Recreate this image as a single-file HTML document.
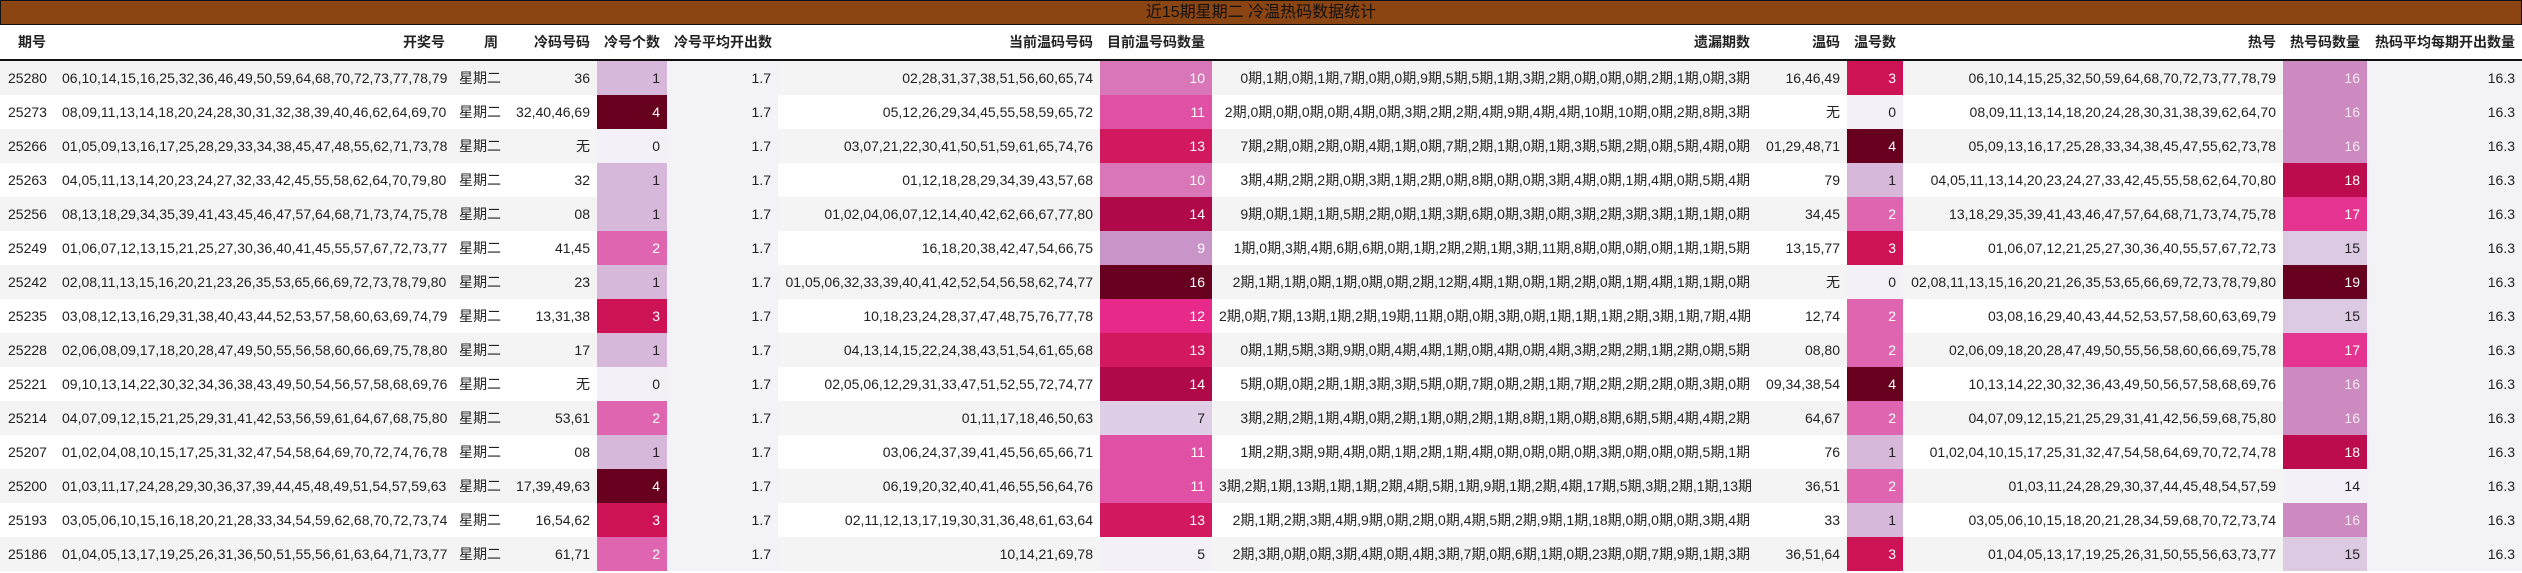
<!DOCTYPE html>
<html><head><meta charset="utf-8">
<style>
html,body{margin:0;padding:0;background:#fff;}
body{width:2522px;height:573px;overflow:hidden;font-family:"Liberation Sans","Noto Sans CJK SC",sans-serif;font-size:14px;color:#222;}
.title{box-sizing:border-box;height:25px;background:#8B4513;border:1px solid #111;text-align:center;line-height:23px;font-size:16px;color:#111;}
table{border-collapse:collapse;table-layout:fixed;width:2522px;}
td,th{padding:0 7px;text-align:right;white-space:nowrap;overflow:visible;}
th{height:34px;font-weight:bold;font-size:14px;border-bottom:2px solid #111;background:#fff;}
td{height:34px;}
tr.g td{background:#f4f4f4;}
tr.w td{background:#fff;}
td.l{text-align:left;padding-left:8px;}
th.l{text-align:left;padding-left:18px;}
tr td.av{background:#f3f2f7;}
.c0{background:#f3f1f7!important;color:#222}
.c1{background:#d7b7da!important;color:#222}
.c2{background:#df65b0!important;color:#fff}
.c3{background:#ce1256!important;color:#fff}
.c4{background:#67001f!important;color:#fff}
.t5{background:#f3f1f7!important;color:#222}
.t7{background:#dfcfe6!important;color:#222}
.t9{background:#c994c7!important;color:#fff}
.t10{background:#d876b8!important;color:#fff}
.t11{background:#e050a4!important;color:#fff}
.t12{background:#e7298a!important;color:#fff}
.t13{background:#d2185e!important;color:#fff}
.t14{background:#b0094a!important;color:#fff}
.t16{background:#67001f!important;color:#fff}
.h14{background:#f3f1f7!important;color:#222}
.h15{background:#dcc9e2!important;color:#222}
.h16{background:#cc8ac0!important;color:#f4e8f0}
.h17{background:#e5348f!important;color:#fff}
.h18{background:#bc0c4e!important;color:#fff}
.h19{background:#67001f!important;color:#fff}
</style></head><body>
<div class="title">近15期星期二 冷温热码数据统计</div>
<table>
<colgroup>
<col style="width:55px"><col style="width:397px"><col style="width:53px"><col style="width:92px"><col style="width:70px"><col style="width:111px"><col style="width:322px"><col style="width:112px"><col style="width:545px"><col style="width:90px"><col style="width:56px"><col style="width:380px"><col style="width:84px"><col style="width:155px">
</colgroup>
<tr><th class="l">期号</th><th>开奖号</th><th>周</th><th>冷码号码</th><th>冷号个数</th><th>冷号平均开出数</th><th>当前温码号码</th><th>目前温号码数量</th><th>遗漏期数</th><th>温码</th><th>温号数</th><th>热号</th><th>热号码数量</th><th>热码平均每期开出数量</th></tr>
<tr class="g"><td class="l">25280</td><td>06,10,14,15,16,25,32,36,46,49,50,59,64,68,70,72,73,77,78,79</td><td>星期二</td><td>36</td><td class="c1">1</td><td class="av">1.7</td><td>02,28,31,37,38,51,56,60,65,74</td><td class="t10">10</td><td>0期,1期,0期,1期,7期,0期,0期,9期,5期,5期,1期,3期,2期,0期,0期,0期,2期,1期,0期,3期</td><td>16,46,49</td><td class="c3">3</td><td>06,10,14,15,25,32,50,59,64,68,70,72,73,77,78,79</td><td class="h16">16</td><td class="av">16.3</td></tr>
<tr class="w"><td class="l">25273</td><td>08,09,11,13,14,18,20,24,28,30,31,32,38,39,40,46,62,64,69,70</td><td>星期二</td><td>32,40,46,69</td><td class="c4">4</td><td class="av">1.7</td><td>05,12,26,29,34,45,55,58,59,65,72</td><td class="t11">11</td><td>2期,0期,0期,0期,0期,4期,0期,3期,2期,2期,4期,9期,4期,4期,10期,10期,0期,2期,8期,3期</td><td>无</td><td class="c0">0</td><td>08,09,11,13,14,18,20,24,28,30,31,38,39,62,64,70</td><td class="h16">16</td><td class="av">16.3</td></tr>
<tr class="g"><td class="l">25266</td><td>01,05,09,13,16,17,25,28,29,33,34,38,45,47,48,55,62,71,73,78</td><td>星期二</td><td>无</td><td class="c0">0</td><td class="av">1.7</td><td>03,07,21,22,30,41,50,51,59,61,65,74,76</td><td class="t13">13</td><td>7期,2期,0期,2期,0期,4期,1期,0期,7期,2期,1期,0期,1期,3期,5期,2期,0期,5期,4期,0期</td><td>01,29,48,71</td><td class="c4">4</td><td>05,09,13,16,17,25,28,33,34,38,45,47,55,62,73,78</td><td class="h16">16</td><td class="av">16.3</td></tr>
<tr class="w"><td class="l">25263</td><td>04,05,11,13,14,20,23,24,27,32,33,42,45,55,58,62,64,70,79,80</td><td>星期二</td><td>32</td><td class="c1">1</td><td class="av">1.7</td><td>01,12,18,28,29,34,39,43,57,68</td><td class="t10">10</td><td>3期,4期,2期,2期,0期,3期,1期,2期,0期,8期,0期,0期,3期,4期,0期,1期,4期,0期,5期,4期</td><td>79</td><td class="c1">1</td><td>04,05,11,13,14,20,23,24,27,33,42,45,55,58,62,64,70,80</td><td class="h18">18</td><td class="av">16.3</td></tr>
<tr class="g"><td class="l">25256</td><td>08,13,18,29,34,35,39,41,43,45,46,47,57,64,68,71,73,74,75,78</td><td>星期二</td><td>08</td><td class="c1">1</td><td class="av">1.7</td><td>01,02,04,06,07,12,14,40,42,62,66,67,77,80</td><td class="t14">14</td><td>9期,0期,1期,1期,5期,2期,0期,1期,3期,6期,0期,3期,0期,3期,2期,3期,3期,1期,1期,0期</td><td>34,45</td><td class="c2">2</td><td>13,18,29,35,39,41,43,46,47,57,64,68,71,73,74,75,78</td><td class="h17">17</td><td class="av">16.3</td></tr>
<tr class="w"><td class="l">25249</td><td>01,06,07,12,13,15,21,25,27,30,36,40,41,45,55,57,67,72,73,77</td><td>星期二</td><td>41,45</td><td class="c2">2</td><td class="av">1.7</td><td>16,18,20,38,42,47,54,66,75</td><td class="t9">9</td><td>1期,0期,3期,4期,6期,6期,0期,1期,2期,2期,1期,3期,11期,8期,0期,0期,0期,1期,1期,5期</td><td>13,15,77</td><td class="c3">3</td><td>01,06,07,12,21,25,27,30,36,40,55,57,67,72,73</td><td class="h15">15</td><td class="av">16.3</td></tr>
<tr class="g"><td class="l">25242</td><td>02,08,11,13,15,16,20,21,23,26,35,53,65,66,69,72,73,78,79,80</td><td>星期二</td><td>23</td><td class="c1">1</td><td class="av">1.7</td><td>01,05,06,32,33,39,40,41,42,52,54,56,58,62,74,77</td><td class="t16">16</td><td>2期,1期,1期,0期,1期,0期,0期,2期,12期,4期,1期,0期,1期,2期,0期,1期,4期,1期,1期,0期</td><td>无</td><td class="c0">0</td><td>02,08,11,13,15,16,20,21,26,35,53,65,66,69,72,73,78,79,80</td><td class="h19">19</td><td class="av">16.3</td></tr>
<tr class="w"><td class="l">25235</td><td>03,08,12,13,16,29,31,38,40,43,44,52,53,57,58,60,63,69,74,79</td><td>星期二</td><td>13,31,38</td><td class="c3">3</td><td class="av">1.7</td><td>10,18,23,24,28,37,47,48,75,76,77,78</td><td class="t12">12</td><td>2期,0期,7期,13期,1期,2期,19期,11期,0期,0期,3期,0期,1期,1期,1期,2期,3期,1期,7期,4期</td><td>12,74</td><td class="c2">2</td><td>03,08,16,29,40,43,44,52,53,57,58,60,63,69,79</td><td class="h15">15</td><td class="av">16.3</td></tr>
<tr class="g"><td class="l">25228</td><td>02,06,08,09,17,18,20,28,47,49,50,55,56,58,60,66,69,75,78,80</td><td>星期二</td><td>17</td><td class="c1">1</td><td class="av">1.7</td><td>04,13,14,15,22,24,38,43,51,54,61,65,68</td><td class="t13">13</td><td>0期,1期,5期,3期,9期,0期,4期,4期,1期,0期,4期,0期,4期,3期,2期,2期,1期,2期,0期,5期</td><td>08,80</td><td class="c2">2</td><td>02,06,09,18,20,28,47,49,50,55,56,58,60,66,69,75,78</td><td class="h17">17</td><td class="av">16.3</td></tr>
<tr class="w"><td class="l">25221</td><td>09,10,13,14,22,30,32,34,36,38,43,49,50,54,56,57,58,68,69,76</td><td>星期二</td><td>无</td><td class="c0">0</td><td class="av">1.7</td><td>02,05,06,12,29,31,33,47,51,52,55,72,74,77</td><td class="t14">14</td><td>5期,0期,0期,2期,1期,3期,3期,5期,0期,7期,0期,2期,1期,7期,2期,2期,2期,0期,3期,0期</td><td>09,34,38,54</td><td class="c4">4</td><td>10,13,14,22,30,32,36,43,49,50,56,57,58,68,69,76</td><td class="h16">16</td><td class="av">16.3</td></tr>
<tr class="g"><td class="l">25214</td><td>04,07,09,12,15,21,25,29,31,41,42,53,56,59,61,64,67,68,75,80</td><td>星期二</td><td>53,61</td><td class="c2">2</td><td class="av">1.7</td><td>01,11,17,18,46,50,63</td><td class="t7">7</td><td>3期,2期,2期,1期,4期,0期,2期,1期,0期,2期,1期,8期,1期,0期,8期,6期,5期,4期,4期,2期</td><td>64,67</td><td class="c2">2</td><td>04,07,09,12,15,21,25,29,31,41,42,56,59,68,75,80</td><td class="h16">16</td><td class="av">16.3</td></tr>
<tr class="w"><td class="l">25207</td><td>01,02,04,08,10,15,17,25,31,32,47,54,58,64,69,70,72,74,76,78</td><td>星期二</td><td>08</td><td class="c1">1</td><td class="av">1.7</td><td>03,06,24,37,39,41,45,56,65,66,71</td><td class="t11">11</td><td>1期,2期,3期,9期,4期,0期,1期,2期,1期,4期,0期,0期,0期,0期,3期,0期,0期,0期,5期,1期</td><td>76</td><td class="c1">1</td><td>01,02,04,10,15,17,25,31,32,47,54,58,64,69,70,72,74,78</td><td class="h18">18</td><td class="av">16.3</td></tr>
<tr class="g"><td class="l">25200</td><td>01,03,11,17,24,28,29,30,36,37,39,44,45,48,49,51,54,57,59,63</td><td>星期二</td><td>17,39,49,63</td><td class="c4">4</td><td class="av">1.7</td><td>06,19,20,32,40,41,46,55,56,64,76</td><td class="t11">11</td><td>3期,2期,1期,13期,1期,1期,2期,4期,5期,1期,9期,1期,2期,4期,17期,5期,3期,2期,1期,13期</td><td>36,51</td><td class="c2">2</td><td>01,03,11,24,28,29,30,37,44,45,48,54,57,59</td><td class="h14">14</td><td class="av">16.3</td></tr>
<tr class="w"><td class="l">25193</td><td>03,05,06,10,15,16,18,20,21,28,33,34,54,59,62,68,70,72,73,74</td><td>星期二</td><td>16,54,62</td><td class="c3">3</td><td class="av">1.7</td><td>02,11,12,13,17,19,30,31,36,48,61,63,64</td><td class="t13">13</td><td>2期,1期,2期,3期,4期,9期,0期,2期,0期,4期,5期,2期,9期,1期,18期,0期,0期,0期,3期,4期</td><td>33</td><td class="c1">1</td><td>03,05,06,10,15,18,20,21,28,34,59,68,70,72,73,74</td><td class="h16">16</td><td class="av">16.3</td></tr>
<tr class="g"><td class="l">25186</td><td>01,04,05,13,17,19,25,26,31,36,50,51,55,56,61,63,64,71,73,77</td><td>星期二</td><td>61,71</td><td class="c2">2</td><td class="av">1.7</td><td>10,14,21,69,78</td><td class="t5">5</td><td>2期,3期,0期,0期,3期,4期,0期,4期,3期,7期,0期,6期,1期,0期,23期,0期,7期,9期,1期,3期</td><td>36,51,64</td><td class="c3">3</td><td>01,04,05,13,17,19,25,26,31,50,55,56,63,73,77</td><td class="h15">15</td><td class="av">16.3</td></tr>
</table>
</body></html>
